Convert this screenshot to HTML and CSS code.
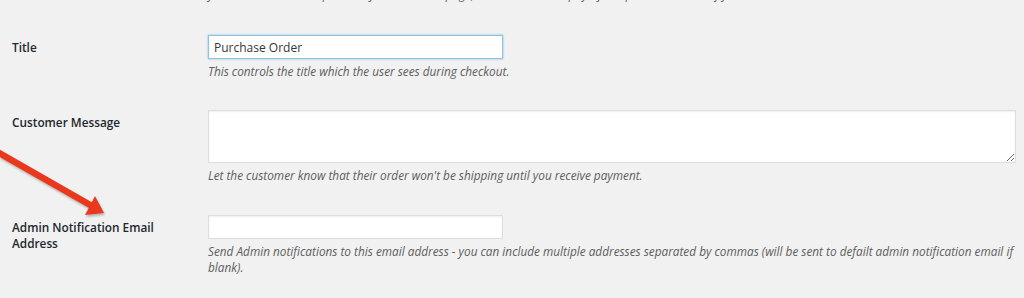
FILE: index.html
```html
<!DOCTYPE html>
<html>
<head>
  <title>Purchase Order - Settings</title>
  <link rel="stylesheet" href="styles.css">
</head>
<body>

  <div class="settings">
    <div class="row row-cut">
      <div class="label"></div>
      <div class="field">
        <p class="description">you will see this description on your checkout page, the customer will pay by the purchase order of your store.</p>
      </div>
    </div>

    <div class="row">
      <label class="label" for="title">Title</label>
      <div class="field">
        <input type="text" id="title" class="text-input focused" value="Purchase Order">
        <p class="description">This controls the title which the user sees during checkout.</p>
      </div>
    </div>

    <div class="row">
      <label class="label" for="message">Customer Message</label>
      <div class="field">
        <textarea id="message" class="text-area"></textarea>
        <p class="description">Let the customer know that their order won't be shipping until you receive payment.</p>
      </div>
    </div>

    <div class="row row-last">
      <label class="label" for="email">Admin Notification Email Address</label>
      <div class="field">
        <input type="text" id="email" class="text-input">
        <p class="description">Send Admin notifications to this email address - you can include multiple addresses separated by commas (will be sent to defailt admin notification email if blank).</p>
      </div>
    </div>
  </div>

  <svg class="arrow" width="120" height="90" viewBox="0 0 120 90">
    <line x1="-6" y1="10" x2="92" y2="66" stroke="#e9381c" stroke-width="6.5"/>
    <polygon points="104,73 85,75 95,56" fill="#e9381c"/>
  </svg>

</body>
</html>
```

FILE: styles.css
```css
body {
  font-family: "Open Sans", Arial, sans-serif;
  background: #f1f1f1;
  color: #222;
  margin: 0;
  padding: 0;
  overflow: hidden;
}

.settings {
  display: flex;
  flex-direction: column;
  gap: 31px;
  padding-left: 12px;
}

.row {
  display: grid;
  grid-template-columns: 196px 808px;
}

.row-cut {
  margin-top: -18px;
  margin-bottom: 2px;
}

.row-last {
  margin-top: 1px;
}

.label {
  font-size: 11.8px;
  font-weight: 600;
  line-height: 16px;
  color: #23282d;
  padding-top: 4px;
  padding-right: 20px;
}

.field {
  display: flex;
  flex-direction: column;
}

.text-input {
  box-sizing: border-box;
  width: 295px;
  height: 24px;
  margin: 0;
  padding: 2px 5px;
  font-family: "Open Sans", Arial, sans-serif;
  font-size: 12px;
  color: #32373c;
  background: #fff;
  border: 1px solid #ddd;
  box-shadow: inset 0 1px 2px rgba(0,0,0,0.07);
  outline: none;
}

.text-input.focused {
  border-color: #8cc2ea;
  box-shadow: 0 0 2px rgba(30,140,190,0.5);
}

.text-area {
  box-sizing: border-box;
  width: 808px;
  height: 53px;
  margin: 0;
  padding: 2px 6px;
  font-family: "Open Sans", Arial, sans-serif;
  font-size: 12px;
  background: #fff;
  border: 1px solid #ddd;
  box-shadow: inset 0 1px 2px rgba(0,0,0,0.07);
  outline: none;
}

.description {
  margin: 4px 0 0;
  font-size: 11.8px;
  font-style: italic;
  line-height: 16px;
  color: #5e5e5e;
}

.arrow {
  position: absolute;
  left: 0;
  top: 140px;
  filter: drop-shadow(1px 2px 1px rgba(0,0,0,0.25));
}
```
